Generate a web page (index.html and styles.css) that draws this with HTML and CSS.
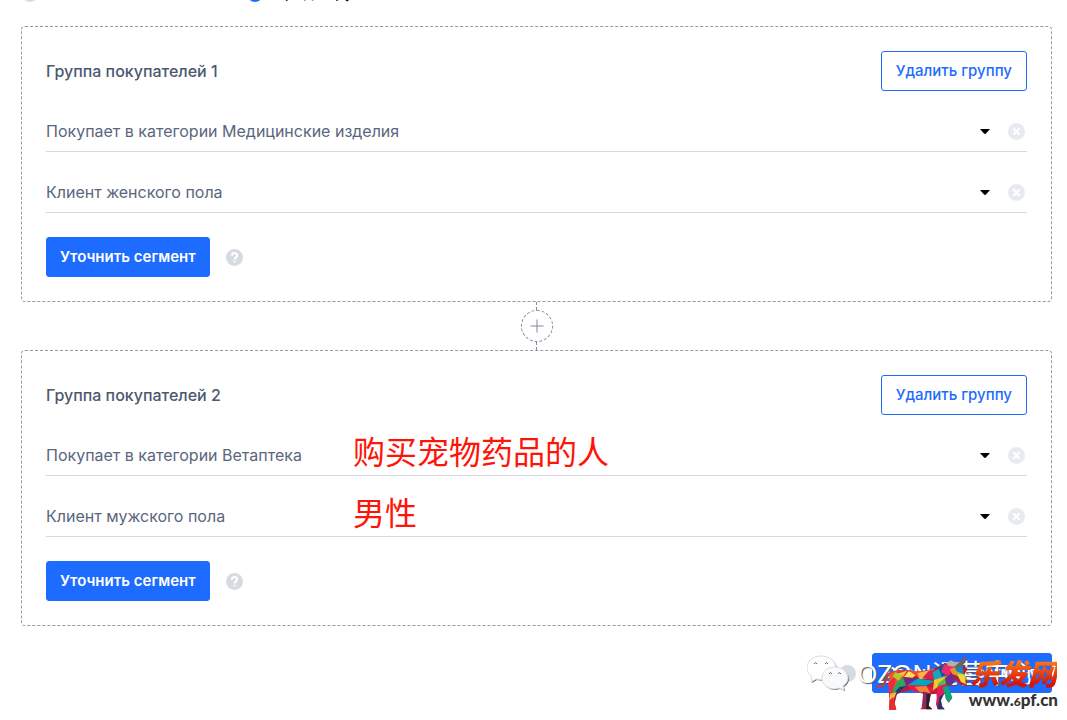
FILE: index.html
```
<!DOCTYPE html>
<html lang="ru">
  <head>
    <meta charset="UTF-8" />
    <meta name="viewport" content="width=device-width, initial-scale=1.0" />
    <title>Группы покупателей</title>
    <link rel="stylesheet" href="styles.css">
  </head>
  <body>
    <div class="options">
      <span class="dot"></span>
      <span class="dot active"></span>
      <span class="option-text">Среди групп</span>
    </div>

    <div class="page">
      <section class="group">
        <div class="group-head">
          <h2>Группа покупателей 1</h2>
          <button class="btn outline">Удалить группу</button>
        </div>
        <div class="row">
          <select aria-label="Категория">
            <option>Покупает в категории Медицинские изделия</option>
          </select>
          <svg class="arrow" viewBox="0 0 10 5"><path d="M0 0h10L6 4.500Q5 5.300 4 4.500z" /></svg>
          <button class="remove" aria-label="Удалить условие">
            <svg viewBox="0 0 16 16"><circle cx="8" cy="8" r="8" /><path d="M5 5l6 6M11 5l-6 6" /></svg>
          </button>
        </div>
        <div class="row">
          <select aria-label="Пол">
            <option>Клиент женского пола</option>
          </select>
          <svg class="arrow" viewBox="0 0 10 5"><path d="M0 0h10L6 4.500Q5 5.300 4 4.500z" /></svg>
          <button class="remove" aria-label="Удалить условие">
            <svg viewBox="0 0 16 16"><circle cx="8" cy="8" r="8" /><path d="M5 5l6 6M11 5l-6 6" /></svg>
          </button>
        </div>
        <div class="group-foot">
          <button class="btn">Уточнить сегмент</button>
          <svg class="help" viewBox="0 0 16 16"><circle cx="8" cy="8" r="8" /><path d="M5.600 6.300C5.600 3 10.400 3 10.400 6.100C10.400 7.900 8 7.900 8 9.900" /><rect x="7.200" y="11" width="1.700" height="1.700" /></svg>
        </div>
      </section>

      <div class="connector">
        <button class="plus" aria-label="Добавить группу">
          <svg viewBox="0 0 14 14"><path d="M7 .5v13M.5 7h13" /></svg>
        </button>
      </div>

      <section class="group">
        <div class="group-head">
          <h2>Группа покупателей 2</h2>
          <button class="btn outline">Удалить группу</button>
        </div>
        <div class="row">
          <select aria-label="Категория">
            <option>Покупает в категории Ветаптека</option>
          </select>
          <svg class="arrow" viewBox="0 0 10 5"><path d="M0 0h10L6 4.500Q5 5.300 4 4.500z" /></svg>
          <button class="remove" aria-label="Удалить условие">
            <svg viewBox="0 0 16 16"><circle cx="8" cy="8" r="8" /><path d="M5 5l6 6M11 5l-6 6" /></svg>
          </button>
          <span class="note" lang="zh-CN">购买宠物药品的人</span>
        </div>
        <div class="row">
          <select aria-label="Пол">
            <option>Клиент мужского пола</option>
          </select>
          <svg class="arrow" viewBox="0 0 10 5"><path d="M0 0h10L6 4.500Q5 5.300 4 4.500z" /></svg>
          <button class="remove" aria-label="Удалить условие">
            <svg viewBox="0 0 16 16"><circle cx="8" cy="8" r="8" /><path d="M5 5l6 6M11 5l-6 6" /></svg>
          </button>
          <span class="note" lang="zh-CN">男性</span>
        </div>
        <div class="group-foot">
          <button class="btn">Уточнить сегмент</button>
          <svg class="help" viewBox="0 0 16 16"><circle cx="8" cy="8" r="8" /><path d="M5.600 6.300C5.600 3 10.400 3 10.400 6.100C10.400 7.900 8 7.900 8 9.900" /><rect x="7.200" y="11" width="1.700" height="1.700" /></svg>
        </div>
      </section>

      <div class="actions">
        <svg class="help" viewBox="0 0 16 16"><circle cx="8" cy="8" r="8" /></svg>
        <button class="btn">Рассчитать сегмент</button>

        <div class="channel" lang="zh-CN">
          <svg viewBox="0 0 42 36">
            <g class="bubble-shadow">
              <path d="M15 2C7 2 1 7 1 14c0 4 2 7 5 9l-1 5 5-3c11 3 20-3 20-11C30 7 23 2 15 2z" />
              <path d="M29 13c-8 0-13 5-13 11s5 11 13 11l4-1 5 2-1-4c3-2 5-5 5-8 0-6-5-11-13-11z" />
            </g>
            <path d="M14 1C6 1 0 6 0 13c0 4 2 7 5 9l-1 5 5-3c11 3 20-3 20-11C29 6 22 1 14 1z" />
            <path class="front" d="M28 12c-8 0-13 5-13 11s5 11 13 11l4-1 5 2-1-4c3-2 5-5 5-8 0-6-5-11-13-11z" />
            <path class="eyes" d="M7 9q2-3 3 0M18 9q2-3 3 0M22 19q1-3 3 0M31 19q1-3 3 0" />
          </svg>
          <span>OZON运营中心</span>
        </div>

        <div class="site">
          <!-- bull made of coloured facets -->
          <svg class="bull" viewBox="240 36 285 174">
            <path class="tail" d="M330 93C300 89 278 91 272 110C266 130 259 141 241 137" />
            <path fill="#b62035" d="M283 97L305 88L345 88L360 94L415 83L448 65L475 76L500 72L515 84L505 101L516 119L510 134L494 132L479 116L468 131L452 132L461 158L469 171L458 185L450 174L446 152L432 168L438 196L446 205H425L420 190L424 158L404 160L398 194L409 205H372L385 194L381 159L356 146L331 150L303 159L296 187L301 206H279L281 178L285 153L277 128z" />
            <path fill="#f15a24" d="M283 97L305 88L333 90L314 124L281 155L277 128z" />
            <path fill="#ef2943" d="M305 90L330 90L300 116L291 149L280 178L277 128z" />
            <path fill="#ffc247" d="M292 102L333 89L322 104L298 111z" />
            <path fill="#a6ce39" d="M298 94L320 102L308 119L290 107z" />
            <path fill="#ffdf4d" d="M337 91L366 97L349 111L324 108z" />
            <path fill="#f44c32" d="M340 90L387 91L414 107L370 112z" />
            <path fill="#ffb340" d="M364 97L416 83L397 111L371 115z" />
            <path fill="#d32450" d="M398 90L416 84L420 118L379 111z" />
            <path fill="#00a8c7" d="M366 113L415 120L390 134L332 133L323 109z" />
            <path fill="#77258b" d="M324 109L366 112L332 134L306 148z" />
            <path fill="#ed1848" d="M332 133L390 134L421 145L398 158L350 150z" />
            <path fill="#ef8532" d="M356 137L391 135L403 156L371 153z" />
            <path fill="#29a95c" d="M303 123L322 111L330 134L302 158L287 154z" />
            <path fill="#2d3183" d="M310 138L331 134L303 160L285 169z" />
            <path fill="#f6b93b" d="M282 158L302 153L289 183L280 192z" />
            <path fill="#e52e31" d="M280 177L292 169L296 187L301 206H279z" />
            <path fill="#8b2b62" d="M382 151L404 158L394 192L377 201z" />
            <path fill="#2b1f23" d="M392 158L404 160L398 194L409 205H390z" />
            <path fill="#16a7bc" d="M410 94L432 81L452 98L426 128L415 121z" />
            <path fill="#0757a5" d="M427 81L449 65L454 98L438 108z" />
            <path fill="#e82b6d" d="M444 70L475 76L458 105L435 94z" />
            <path fill="#f5c62f" d="M414 117L455 104L428 136L411 148z" />
            <path fill="#58b947" d="M426 128L455 104L453 133L423 155z" />
            <path fill="#e31b58" d="M427 135L450 129L458 154L439 162L425 195L421 157z" />
            <path fill="#692c90" d="M447 111L466 98L479 116L467 131L451 132z" />
            <path fill="#f58b32" d="M461 85L480 77L491 107L469 99z" />
            <path fill="#1885ba" d="M476 77L500 72L503 97L488 110z" />
            <path fill="#8fc63f" d="M473 88L505 100L516 119L498 110z" />
            <path fill="#f2d63d" d="M483 99L505 101L510 130L495 123z" />
            <path fill="#12a57d" d="M440 139L456 135L469 169L459 184L450 174z" />
            <path fill="#263277" d="M430 169L446 155L435 178L438 196L446 205H425z" />
            <path fill="#71605f" d="M474 76C479 61 498 66 505 43C515 58 507 73 485 79z" />
            <path fill="#b8aea1" d="M449 66L465 58L476 63L491 63L475 77L458 75z" />
          </svg>
          <div class="site-name">
            <b lang="zh-CN">乐发网</b>
            <a href="#">www.<small>6</small>pf.cn</a>
          </div>
        </div>
      </div>
    </div>
  </body>
</html>
```

FILE: styles.css
```
* {
  box-sizing: border-box;
}
body {
  margin: 0;
  min-height: 100vh;
  background: #fff;
  color: #4b5870;
  font-family: Inter, "Noto Sans CJK SC", sans-serif;
  font-size: 16px;
  line-height: 24px;
}
button,
select {
  font: inherit;
  cursor: pointer;
}
/* bottom edge of the options bar */
.options {
  display: flex;
  align-items: flex-end;
  height: 2px;
  overflow: hidden;
  padding-left: 22px;
}
.dot {
  flex: none;
  width: 16px;
  height: 16px;
  margin-right: 209px;
  border-radius: 50%;
  background: #d8dce6;
}
.dot.active {
  margin-right: 10px;
  background: #1d6bff;
}
.option-text {
  color: #111;
  font-size: 16px;
  line-height: 20px;
}
.page {
  margin: 24px 15px 0 21px;
}
.group {
  padding: 24px;
  border: 1px dashed #9299aa;
  border-radius: 4px;
}
.group-head {
  display: flex;
  align-items: center;
  justify-content: space-between;
}
.group-head h2 {
  margin: 0;
  font-size: 16px;
  font-weight: 500;
}
.btn {
  height: 40px;
  padding: 0 13px;
  border: 1px solid #1d6bff;
  border-radius: 3px;
  background: #1d6bff;
  color: #fff;
  font-size: 15px;
  font-weight: 600;
}
.btn.outline {
  padding: 0 14px;
  background: #fff;
  color: #1d6bff;
  font-weight: 500;
}
.row {
  position: relative;
  display: flex;
  align-items: center;
  height: 41px;
  margin-top: 20px;
  padding-right: 2px;
  border-bottom: 1px solid #d5d9e3;
}
.row select {
  flex: 1;
  height: 40px;
  padding: 0;
  border: none;
  appearance: none;
  background: none;
  color: #5a667c;
  font-weight: 400;
}
.arrow {
  width: 10px;
  height: 5px;
  margin-right: 18px;
}
.remove {
  display: flex;
  padding: 0;
  border: none;
  background: none;
}
.remove svg {
  width: 17px;
  height: 17px;
  fill: #e7eaf0;
}
.remove path {
  stroke: #fff;
  stroke-width: 2;
}
.note {
  position: absolute;
  left: 307px;
  bottom: 5px;
  color: #ff1408;
  font-family: "Noto Sans CJK SC", sans-serif;
  font-size: 32px;
  line-height: 40px;
  pointer-events: none;
}
.group-foot {
  display: flex;
  align-items: center;
  gap: 16px;
  margin-top: 24px;
}
.help {
  width: 17px;
  height: 17px;
  fill: #d5dae3;
}
.help path {
  fill: none;
  stroke: #fff;
  stroke-width: 2;
}
.help rect {
  fill: #fff;
}
.connector {
  display: flex;
  flex-direction: column;
  align-items: center;
}
.connector::before,
.connector::after {
  content: "";
  height: 8px;
  border-left: 1px dashed #818b9e;
}
.plus {
  display: flex;
  align-items: center;
  justify-content: center;
  width: 32px;
  height: 32px;
  padding: 0;
  border: 1px dashed #818b9e;
  border-radius: 50%;
  background: #fff;
}
.plus svg {
  width: 14px;
  height: 14px;
  stroke: #808795;
}
.actions {
  position: relative;
  display: flex;
  align-items: center;
  justify-content: flex-end;
  gap: 16px;
  margin-top: 27px;
}
/* channel and site marks lie over the button */
.channel {
  position: absolute;
  right: 16px;
  top: 0;
  display: flex;
  align-items: center;
  gap: 8px;
  color: #fff;
  font-family: "Noto Sans", "Noto Sans CJK SC", sans-serif;
  font-size: 26px;
  line-height: 40px;
  text-shadow: 1px 1px 1px #555;
  white-space: nowrap;
}
.channel svg {
  width: 42px;
  height: 36px;
  fill: #fff;
  stroke: #ddd;
  stroke-width: 1;
}
.channel .bubble-shadow {
  fill: #666;
  stroke: none;
}
.channel .front {
  fill: #f8f9fb;
}
.channel .eyes {
  fill: none;
  stroke: #666;
}
.site {
  position: absolute;
  right: -6px;
  top: 0;
  display: flex;
}
.bull {
  flex: none;
  width: 95px;
  height: 58px;
  margin-right: -2px;
}
.tail {
  fill: none;
  stroke: #c43b3d;
  stroke-width: 7;
}
.site-name {
  display: flex;
  flex-direction: column;
  align-items: center;
}
.site-name b {
  background: linear-gradient(#ff7a16 20%, #d81408 80%);
  background-clip: text;
  color: transparent;
  font-family: "Noto Sans CJK SC", sans-serif;
  font-size: 29px;
  font-style: italic;
  font-weight: 900;
  line-height: 38px;
}
.site-name a {
  color: #333;
  font-family: Lato, sans-serif;
  font-size: 17px;
  font-weight: 900;
  line-height: 18px;
  text-decoration: none;
}
.site-name small {
  font-size: 12px;
}
```
